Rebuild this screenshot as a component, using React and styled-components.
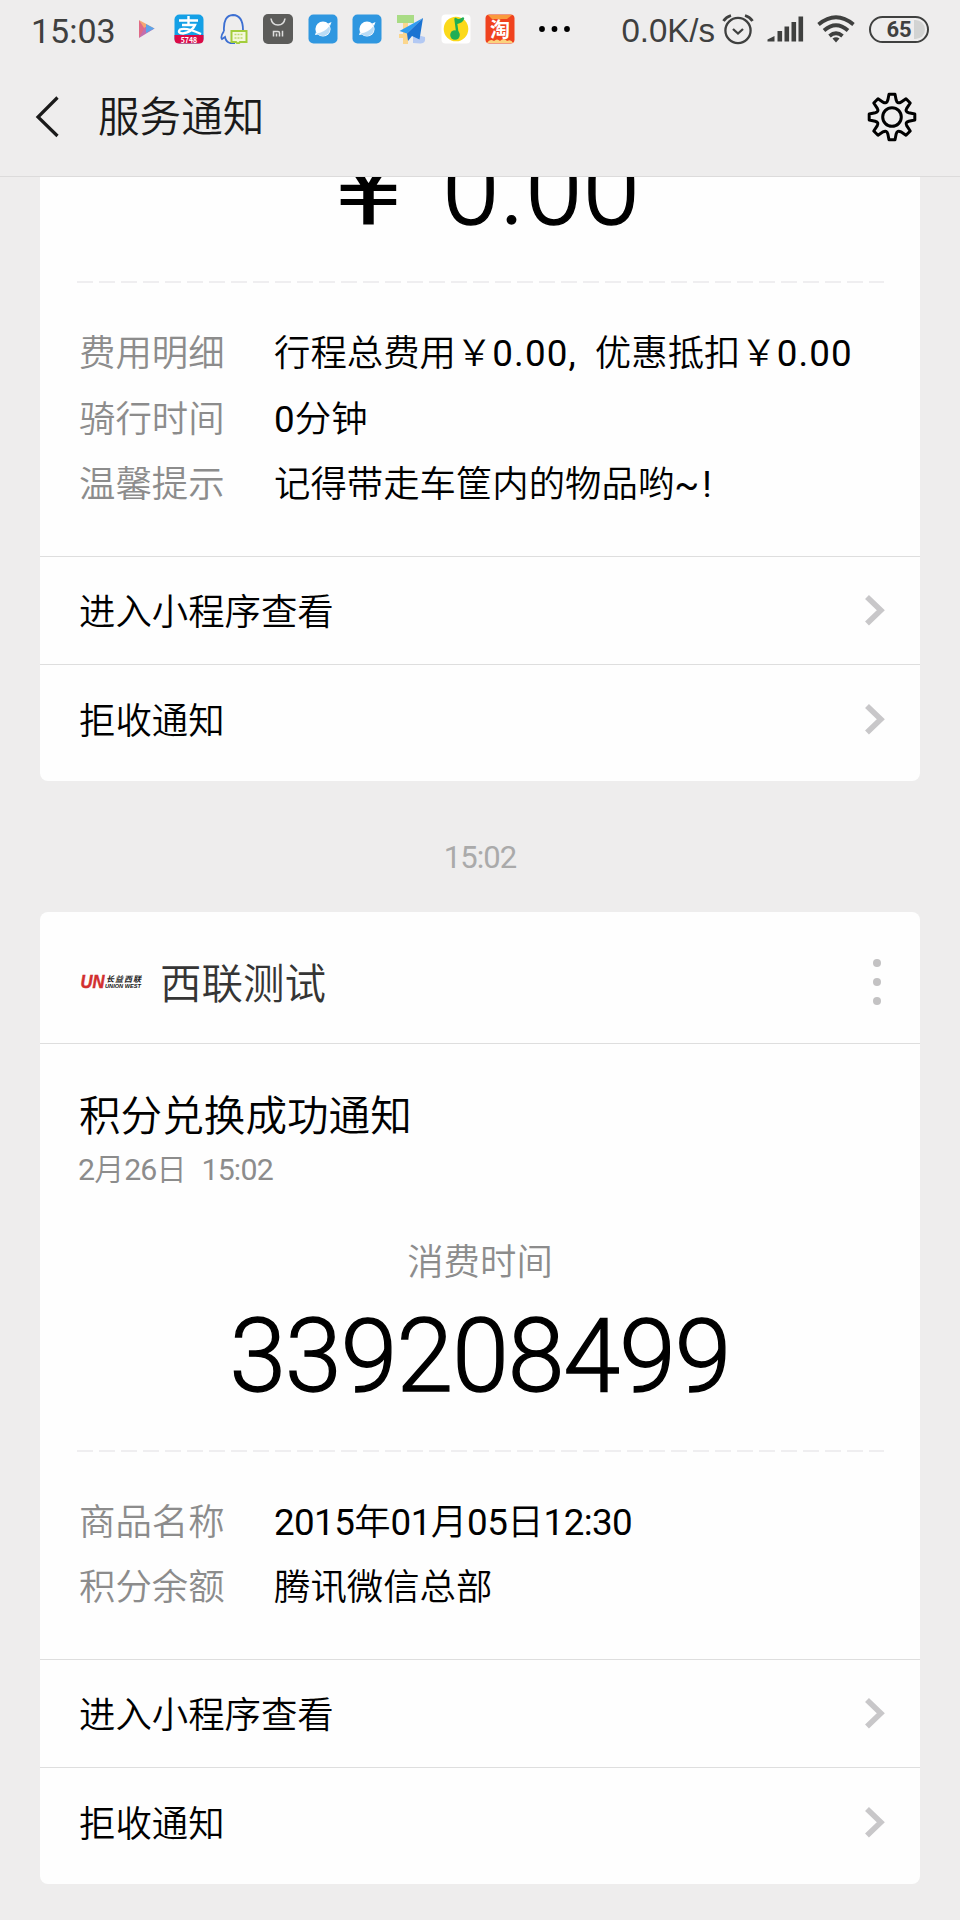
import React from "react";
import styled, { createGlobalStyle, ThemeProvider } from "styled-components";

const theme = {
    page: "#eeeded",
    ink: "#000",
    title: "#1a1a1a",
    muted: "#8c8c8c",
    status: "#3f403f",
    line: "#dedede",
    chevron: "#c8c7c9"
};

// label, value, letter spacing of the digits
const trip = [
    ["费用明细", "行程总费用￥0.00, 优惠抵扣￥0.00", 1.1],
    ["骑行时间", "0分钟", 0.2],
    ["温馨提示", "记得带走车筐内的物品哟~!", 3]
];

const points = [
    ["商品名称", "2015年01月05日12:30", -0.6],
    ["积分余额", "腾讯微信总部", 0]
];

// Digits use a latin face, everything else the CJK one
const Mixed = ({ children, spacing }) =>
    children.split(/([\d.:,~!]+)/).map((part, idx) =>
        idx % 2 ? (
            <Digits key={idx} $spacing={spacing}>
                {part}
            </Digits>
        ) : (
            part
        )
    );

const Chevron = () => (
    <svg width="22" height="34" viewBox="0 0 22 34">
        <path
            d="M4 4 L17.8 17.3 L4 30.6"
            fill="none"
            stroke={theme.chevron}
            strokeWidth="5.6"
        />
    </svg>
);

const Gear = () => {
    const at = (angle, r, side) => {
        const x = r * Math.cos(angle) - side * Math.sin(angle);
        const y = r * Math.sin(angle) + side * Math.cos(angle);
        return `${x.toFixed(2)} ${y.toFixed(2)}`;
    };
    let d = "";
    for (let i = 0; i < 8; i++) {
        const a = (i * Math.PI) / 4;
        const mid = a + Math.PI / 8;
        d += `${i ? "L" : "M"}${at(a, 16.8, -4.2)} L${at(a, 22.8, -3)} `;
        d += `L${at(a, 22.8, 3)} L${at(a, 16.8, 4.2)} `;
        d += `Q${at(mid, 13.8, 0)} ${at(a + Math.PI / 4, 16.8, -4.2)} `;
    }
    return (
        <svg width="50" height="50" viewBox="-25 -25 50 50">
            <g fill="none" stroke="#000" strokeWidth="3" strokeLinejoin="round">
                <path d={`${d}Z`} />
                <circle r="9.3" />
            </g>
        </svg>
    );
};

const Browser = () => (
    <AppIcon viewBox="0 0 30 30">
        <rect x="0.5" y="0.5" width="29" height="29" rx="5" fill="#2f97e0" />
        <circle cx="15" cy="15" r="7.6" fill="#fff" />
        <path d="M9 19.5 Q17 18 21.5 12 Q23.5 19 17 21.7 Q12 23 9 19.5Z" fill="#b9dcf6" />
        <path d="M20 9.5 L23.5 8 L22 12Z M8 18 L7 21 L10 20.5Z" fill="#fff" />
    </AppIcon>
);

const Apps = () => (
    <AppRow>
        <PlayIcon viewBox="0 0 17 20">
            <path d="M1 1 L1 19 L9 10Z" fill="#e06a86" />
            <path d="M1 1 L16.5 9.5 L8 12Z" fill="#f5a672" />
            <path d="M1 19 L16.5 9.5 L7 8Z" fill="#c26fae" />
            <path d="M8 5 L16.5 9.5 L8 14Z" fill="#5da4ea" />
        </PlayIcon>
        <AppIcon viewBox="0 0 30 30">
            <rect x="0.5" y="0.5" width="29" height="29" rx="5" fill="#14a0e6" />
            <path d="M0.5 21 L29.5 21 V25 Q29.5 29.5 25 29.5 H5 Q0.5 29.5 0.5 25Z" fill="#dc0a46" />
            <g fill="none" stroke="#fff" strokeWidth="2.4">
                <path d="M5 6.5 H24 M14.5 2 V11 M8 11 H21 Q18 18 9 19.5 Q3 19 6 15.5 Q12 13 27 20" />
            </g>
            <text x="15" y="29.3" fontSize="7" fontWeight="700" fill="#fff" textAnchor="middle">5748</text>
        </AppIcon>
        <AppIcon viewBox="0 0 30 30">
            <path
                d="M5 17 Q1 23 3 25 L6 23 Q7 28 11 29 H16 M5 17 Q4 1.5 14 1 Q24 1.5 24 16"
                fill="none"
                stroke="#3c6fd2"
                strokeWidth="1.8"
            />
            <path d="M12.5 17 H27.5 V28 H21 L19 30 L17 28 H12.5Z" fill="#f4f8dc" stroke="#a3cd3c" strokeWidth="2" />
            <path d="M15.5 20.5 H24.5 M15.5 24 H24.5" stroke="#c0d870" strokeWidth="1.5" strokeDasharray="2 1" />
        </AppIcon>
        <AppIcon viewBox="0 0 30 30">
            <rect width="30" height="30" rx="5" fill="#5c5c5a" />
            <path d="M8 4.5 Q9 11 15 11 Q21 11 22 4.5" fill="none" stroke="#ddd" strokeWidth="1.6" />
            <path d="M10.5 22.5 V17.5 H15 Q16.5 17.5 16.5 19 V22.5 M13.5 19.5 V22.5 M19.5 16.8 V22.5" fill="none" stroke="#ddd" strokeWidth="1.5" />
        </AppIcon>
        <Browser />
        <Browser />
        <AppIcon viewBox="0 0 30 30">
            <path d="M1 1 H18 V9 H1Z" fill="#a9dc85" />
            <path d="M7 9 H12 V30 H7Z M3 20 H13 V24 H3Z" fill="#fbd68d" />
            <path d="M17 20 L29 23 Q30 30 24 29.5 L17 29Z" fill="#b3c9f3" />
            <path d="M27 4 L3.5 17 L11 19.5Z" fill="#2f9df0" />
            <path d="M27 4 L11 19.5 L12 27 L16 22 L23.5 25.5Z" fill="#1b73d2" />
        </AppIcon>
        <AppIcon viewBox="0 0 30 30">
            <rect x="0.5" y="0.5" width="29" height="29" rx="4" fill="#fff" />
            <circle cx="15" cy="15" r="12.3" fill="#fbd91a" />
            <path
                d="M16.5 20 L14.5 5 Q18 7.5 22 4.5 Q21 8 15.5 9"
                fill="#1fae55"
                stroke="#1fae55"
                strokeWidth="2.4"
                strokeLinejoin="round"
            />
            <circle cx="14" cy="21" r="4.8" fill="#1fae55" />
        </AppIcon>
        <AppIcon viewBox="0 0 30 30">
            <rect x="0.5" y="0.5" width="29" height="29" rx="4" fill="#f0421e" />
            <path d="M3 1 H27 L22 5 H7Z" fill="#fa9a3c" />
            <text x="15" y="22.5" fontSize="20" fontWeight="700" fill="#fff" textAnchor="middle">淘</text>
            <path d="M2 29 Q5 24 9 27 Q12 24 15 27 Q19 23 22 27 Q26 25 28 29Z" fill="#fbd37d" />
        </AppIcon>
        <MoreIcon viewBox="0 0 34 8">
            <circle cx="4" cy="4" r="2.9" />
            <circle cx="16.5" cy="4" r="2.9" />
            <circle cx="29" cy="4" r="2.9" />
        </MoreIcon>
    </AppRow>
);

const Signals = () => (
    <SignalRow>
        <Speed>0.0K/s</Speed>
        <svg width="32" height="32" viewBox="0 0 32 32">
            <g fill="none" stroke={theme.status} strokeWidth="2.3">
                <circle cx="16" cy="17.5" r="12.6" />
                <path d="M11 16 L16 20.5 L21 16" />
                <path d="M1.5 8 Q4 4 9 2.5 M30.5 8 Q28 4 23 2.5" strokeWidth="2.8" />
            </g>
        </svg>
        <svg width="37" height="26" viewBox="0 0 37 26">
            <g fill={theme.status}>
                <path d="M0.5 25.5 V23.5 L7.5 20 V25.5Z" />
                <rect x="10.5" y="15" width="4.6" height="10.5" />
                <rect x="17.5" y="10.5" width="4.6" height="15" />
                <rect x="24.5" y="6" width="4.6" height="19.5" />
                <rect x="31.5" y="0.5" width="4.6" height="25" />
            </g>
        </svg>
        <svg width="38" height="28" viewBox="0 0 38 28">
            <g fill="none" stroke={theme.status} strokeWidth="3.8">
                <path d="M1.5 9.5 Q19 -5 36.5 9.5" />
                <path d="M7 15.5 Q19 5 31 15.5" />
                <path d="M12.5 21 Q19 15.5 25.5 21" />
            </g>
            <path d="M15.5 23.5 Q19 21 22.5 23.5 L19 27.5Z" fill={theme.status} />
        </svg>
        <Battery>65</Battery>
    </SignalRow>
);

const Logo = () => (
    <svg width="64" height="20" viewBox="0 0 64 20">
        <g fontFamily='"Liberation Sans", "Noto Sans CJK SC", sans-serif' fontWeight="700" fontStyle="italic">
            <text x="1.5" y="17" fontSize="18.5" fill="#d22f2f" stroke="#d22f2f" strokeWidth="0.5" textLength="24" lengthAdjust="spacingAndGlyphs">UN</text>
            <text x="27" y="10.5" fontSize="8" fill="#222" textLength="35">长益西联</text>
            <text x="26" y="17" fontSize="6" fill="#111" textLength="36" lengthAdjust="spacingAndGlyphs">UNION WEST</text>
        </g>
    </svg>
);

const Details = ({ rows }) => (
    <DetailList>
        {rows.map(([label, value, spacing]) => (
            <DetailRow key={label}>
                <Label>{label}</Label>
                <Value>
                    <Mixed spacing={spacing}>{value}</Mixed>
                </Value>
            </DetailRow>
        ))}
    </DetailList>
);

const Actions = () => (
    <ActionList>
        {["进入小程序查看", "拒收通知"].map(name => (
            <Action key={name}>
                <ActionName>{name}</ActionName>
                <Chevron />
            </Action>
        ))}
    </ActionList>
);

function App() {
    return (
        <ThemeProvider theme={theme}>
            <GlobalStyle />
            <Screen>
                <Header>
                    <StatusBar>
                        <Clock>15:03</Clock>
                        <Apps />
                        <Signals />
                    </StatusBar>
                    <NavBar>
                        <svg width="24" height="42" viewBox="0 0 24 42">
                            <path d="M22.5 1.5 L3 21 L22.5 40" fill="none" stroke="#1a1a1a" strokeWidth="3.2" />
                        </svg>
                        <NavTitle>服务通知</NavTitle>
                        <Gear />
                    </NavBar>
                </Header>
                <Feed>
                    <Card $clipped>
                        <Amount $clipped>
                            <Yen>￥</Yen>0.00
                        </Amount>
                        <Dashes />
                        <Details rows={trip} />
                        <Actions />
                    </Card>
                    <Time>15:02</Time>
                    <Card>
                        <CardHead>
                            <Logo />
                            <Sender>西联测试</Sender>
                            <svg width="8" height="48" viewBox="0 0 8 48" fill="#c3c2c3">
                                <circle cx="4" cy="6" r="4" />
                                <circle cx="4" cy="25" r="4" />
                                <circle cx="4" cy="44" r="4" />
                            </svg>
                        </CardHead>
                        <Subject>积分兑换成功通知</Subject>
                        <Sent>
                            <span>
                                <Mixed spacing={-0.9}>2月26日</Mixed>
                            </span>
                            <Digits $spacing={-0.8}>15:02</Digits>
                        </Sent>
                        <Caption>消费时间</Caption>
                        <Amount>339208499</Amount>
                        <Dashes />
                        <Details rows={points} />
                        <Actions />
                    </Card>
                </Feed>
            </Screen>
        </ThemeProvider>
    );
}

// Styled Components
const GlobalStyle = createGlobalStyle`
    * {
        box-sizing: border-box;
    }
    body {
        margin: 0;
    }
    svg {
        display: block;
        flex: none;
    }
`;

const Screen = styled.div`
    display: flex;
    flex-direction: column;
    width: 960px;
    height: 1920px;
    overflow: hidden;
    background: ${props => props.theme.page};
    color: ${props => props.theme.ink};
    font-family: "Noto Sans CJK SC", sans-serif;
    font-weight: 350;
    font-size: 36.4px;
    white-space: nowrap;
`;

const Header = styled.header`
    flex: none;
    height: 177px;
    border-bottom: 1px solid #dcdbdb;
`;

const StatusBar = styled.div`
    display: flex;
    align-items: center;
    height: 58px;
    padding: 0 31px;
    color: ${props => props.theme.status};
`;

const Clock = styled.span`
    width: 107px;
    padding-top: 4px;
    font-family: Roboto, sans-serif;
    font-size: 34px;
    font-weight: 400;
    line-height: 58px;
`;

const AppRow = styled.div`
    display: flex;
    align-items: center;
    gap: 14.4px;
    font-family: "Noto Sans CJK SC", sans-serif;
`;

const AppIcon = styled.svg`
    width: 30px;
    height: 30px;
`;

const PlayIcon = styled.svg`
    width: 17px;
    height: 20px;
    margin-right: 5px;
`;

const MoreIcon = styled.svg`
    width: 34px;
    height: 8px;
    margin-left: 8px;
    fill: #000;
`;

const SignalRow = styled.div`
    display: flex;
    align-items: center;
    margin-left: auto;

    svg + svg {
        margin-left: 13px;
    }
`;

const Speed = styled.span`
    margin-right: 7px;
    padding-top: 3px;
    font-family: "Liberation Sans", sans-serif;
    font-size: 33px;
    line-height: 58px;
`;

const Battery = styled.span`
    width: 60px;
    height: 27px;
    margin-left: 14px;
    padding: 2px;
    border: 2.5px solid ${props => props.theme.status};
    border-radius: 14px;
    background: linear-gradient(90deg, transparent 78%, #d2d3d2 78%) content-box;
    font: 700 22px/19px Roboto, sans-serif;
    text-align: center;
`;

const NavBar = styled.nav`
    display: flex;
    align-items: center;
    height: 118px;
    padding: 0 43px 0 35px;
`;

const NavTitle = styled.h1`
    flex: 1;
    margin: 0 0 6px 39px;
    font-size: 41.6px;
    font-weight: inherit;
    line-height: 60px;
    color: ${props => props.theme.title};
`;

const Feed = styled.main`
    flex: 1;
    min-height: 0;
    overflow: hidden;
    padding: 0 40px;
`;

const Card = styled.section`
    background: #fefefe;
    border-radius: ${props => (props.$clipped ? "0 0 8px 8px" : "8px")};
`;

const CardHead = styled.div`
    display: flex;
    align-items: center;
    height: 132px;
    padding: 8px 39px 0;
    border-bottom: 1px solid ${props => props.theme.line};
`;

const Sender = styled.span`
    flex: 1;
    margin-left: 17px;
    font-size: 41.5px;
    color: #353535;
`;

const Subject = styled.h2`
    margin: 0;
    padding: 39px 39px 2px;
    font-size: 41.6px;
    font-weight: inherit;
    line-height: 60px;
`;

const Digits = styled.span`
    font-family: Roboto, sans-serif;
    font-size: 1.01em;
    font-weight: 400;
    line-height: 1;
    letter-spacing: ${props => props.$spacing}px;
`;

const Sent = styled.div`
    display: flex;
    align-items: baseline;
    gap: 15px;
    padding: 0 38px;
    font-size: 30px;
    line-height: 45px;
    color: ${props => props.theme.muted};
`;

const Caption = styled.div`
    margin-top: 41px;
    line-height: 56px;
    text-align: center;
    color: ${props => props.theme.muted};
`;

// The clipped amount slides up under the header
const Amount = styled.div`
    height: ${props => (props.$clipped ? "166px" : "163px")};
    margin-top: ${props => (props.$clipped ? "-62px" : "0")};
    padding: ${props => (props.$clipped ? "3px 8px 0 0" : "5px 0 0")};
    font-family: Roboto, sans-serif;
    font-size: 102px;
    font-weight: 300;
    line-height: 128px;
    letter-spacing: ${props => (props.$clipped ? "1px" : "-0.9px")};
    text-align: center;
    -webkit-text-stroke: 1.4px currentColor;
`;

const Yen = styled.span`
    margin-right: 16px;
    font-family: "Noto Sans CJK SC", sans-serif;
    font-weight: 400;
    font-size: 114px;
    line-height: 1;
    -webkit-text-stroke: 0;
`;

const Dashes = styled.div`
    height: 2px;
    margin: 0 36px 0 37px;
    background: repeating-linear-gradient(90deg, #efeef0 0 16px, transparent 16px 22px);
`;

const DetailList = styled.div`
    padding: 35px 39px 41px;
`;

const DetailRow = styled.div`
    display: flex;
    height: 65.5px;
    line-height: 65px;
`;

const Label = styled.span`
    width: 195px;
    color: ${props => props.theme.muted};
`;

const Value = styled.span`
    flex: 1;
    word-spacing: 10px;
`;

const ActionList = styled.div`
    padding-bottom: 8px;
`;

const Action = styled.div`
    display: flex;
    align-items: center;
    justify-content: space-between;
    height: 108.5px;
    padding: 0 35px 0 39px;
    border-top: 1px solid ${props => props.theme.line};
`;

const ActionName = styled.span`
    padding-bottom: 2px;
`;

const Time = styled.div`
    height: 131px;
    padding-top: 11px;
    font-family: Roboto, sans-serif;
    font-size: 31px;
    font-weight: 400;
    line-height: 131px;
    letter-spacing: -0.9px;
    text-align: center;
    color: #aaa;
`;

export default App;
